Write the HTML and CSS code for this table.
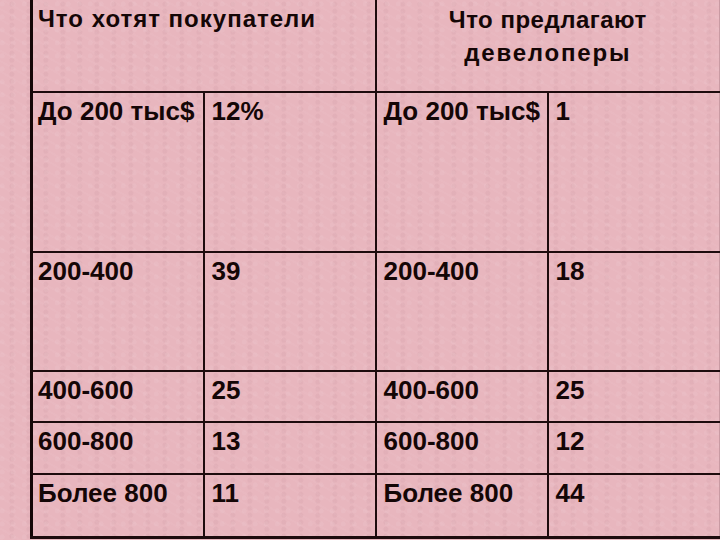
FILE: index.html
```html
<!DOCTYPE html>
<html lang="ru">
<head>
<meta charset="utf-8">
<title>Покупатели и девелоперы</title>
<link rel="stylesheet" href="styles.css">
</head>
<body>
<div class="page">
  <table class="grid">
    <colgroup>
      <col class="c"><col class="c"><col class="c"><col class="c">
    </colgroup>
    <tr class="r-head">
      <th colspan="2" class="h-left">Что хотят покупатели</th>
      <th colspan="2" class="h-right">Что предлагают<br><span class="wide">девелоперы</span></th>
    </tr>
    <tr class="r1">
      <td>До 200 тыс$</td><td>12%</td><td>До 200 тыс$</td><td>1</td>
    </tr>
    <tr class="r2">
      <td>200-400</td><td>39</td><td>200-400</td><td>18</td>
    </tr>
    <tr class="r3">
      <td>400-600</td><td>25</td><td>400-600</td><td>25</td>
    </tr>
    <tr class="r4">
      <td>600-800</td><td>13</td><td>600-800</td><td>12</td>
    </tr>
    <tr class="r5">
      <td>Более 800</td><td>11</td><td>Более 800</td><td>44</td>
    </tr>
  </table>
</div>
</body>
</html>
```

FILE: styles.css
```css
html, body {
  margin: 0;
  padding: 0;
}
body {
  width: 720px;
  height: 540px;
  overflow: hidden;
  background-color: #e8b6be;
  background-image:
    radial-gradient(circle at 20% 30%, rgba(255,255,255,0.06) 0 2px, rgba(0,0,0,0) 3px),
    radial-gradient(circle at 70% 60%, rgba(140,80,90,0.06) 0 2px, rgba(0,0,0,0) 3px),
    repeating-linear-gradient(30deg, rgba(255,255,255,0.03) 0 2px, rgba(0,0,0,0) 2px 9px);
  background-size: 11px 13px, 17px 7px, auto;
  font-family: "Liberation Sans", Arial, sans-serif;
  color: #140606;
}
.page {
  padding: 0 0 0 30px;
}
.grid {
  border-collapse: collapse;
  table-layout: fixed;
  width: 690px;
  margin-top: -1px;
}
.grid .c {
  width: 172px;
}
.grid th, .grid td {
  border: 2px solid #1d0b0d;
  vertical-align: top;
  text-align: left;
  font-weight: bold;
  font-size: 26px;
  line-height: 28px;
  padding: 4px 0 0 7px;
  white-space: nowrap;
}
.grid tr > :first-child {
  border-left: 3px solid #150607;
  padding-left: 5px;
}
.grid tr > :last-child {
  border-right: 1px solid #c99aa3;
}
.grid .r5 td {
  border-bottom-width: 3px;
}
.grid .r-head th {
  border-top: 1px solid #1d0b0d;
}
.grid .h-left {
  font-size: 24px;
  letter-spacing: 1px;
  padding-top: 5px;
}
.grid .h-right {
  text-align: center;
  font-size: 24px;
  letter-spacing: 0.5px;
  line-height: 33px;
  padding: 3px 0 0 0;
}
.wide {
  letter-spacing: 1.8px;
}
.r-head { height: 92px; }
.r1 { height: 160px; }
.r2 { height: 119px; }
.r3 { height: 51px; }
.r4 { height: 52px; }
.r5 { height: 64px; }
```
